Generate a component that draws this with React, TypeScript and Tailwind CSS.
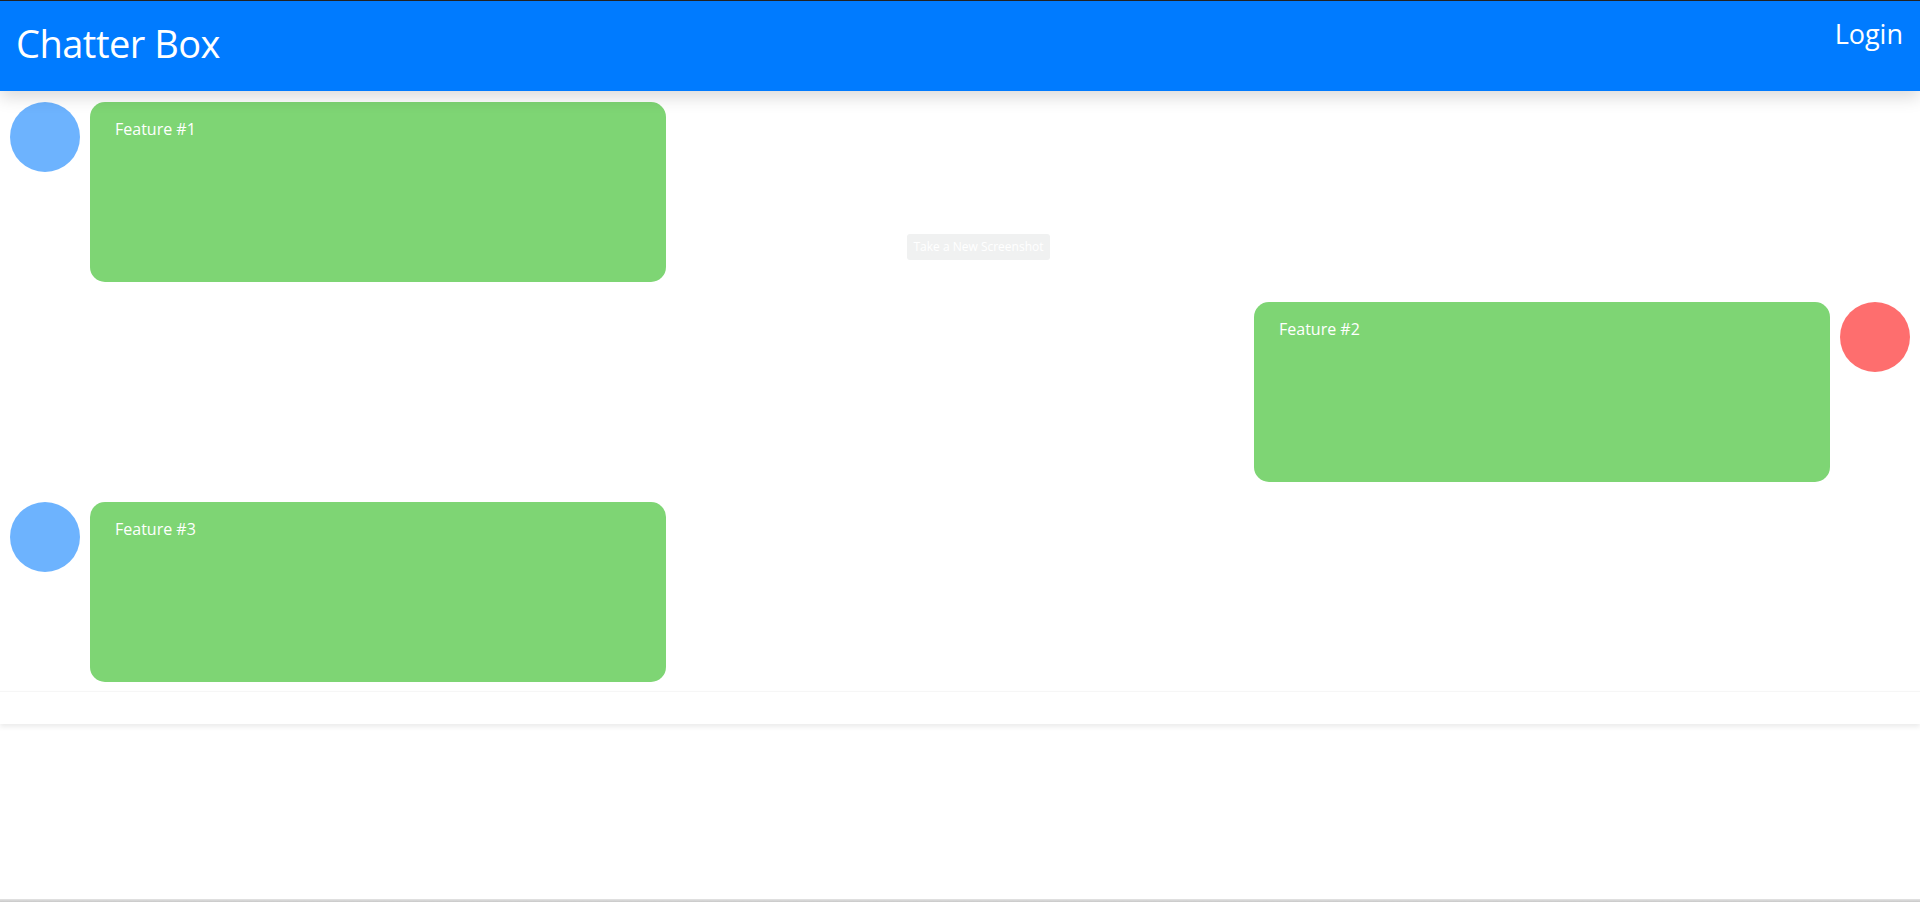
import React from "react";

type Msg = { id: number; text: string; side: "left" | "right" };

const messages: Msg[] = [
  { id: 1, text: "Feature #1", side: "left" },
  { id: 2, text: "Feature #2", side: "right" },
  { id: 3, text: "Feature #3", side: "left" },
];

function Row({ m }: { m: Msg }) {
  const avatar =
    m.side === "left" ? (
      <div className="w-[70px] h-[70px] rounded-full bg-[#6db3fe] shrink-0" />
    ) : (
      <div className="w-[70px] h-[70px] rounded-full bg-[#fe6e6e] shrink-0" />
    );
  const card = (
    <div className="w-[576px] h-[180px] rounded-[15px] bg-[#7ed574] px-[25px] pt-[15px] text-white text-[16px] leading-[24px]">
      {m.text}
    </div>
  );
  return (
    <div className={`flex gap-[10px] px-[10px] ${m.side === "right" ? "justify-end" : "justify-start"}`}>
      {m.side === "left" ? (
        <>
          {avatar}
          {card}
        </>
      ) : (
        <>
          {card}
          {avatar}
        </>
      )}
    </div>
  );
}

export default function App() {
  return (
    <div
      className="relative min-h-[902px] bg-white border-t border-[#222] overflow-hidden"
      style={{ fontFamily: '"Open Sans", "Noto Sans", "Liberation Sans", sans-serif' }}
    >
      <header className="relative z-10 h-[90px] bg-[#007bff] flex justify-between items-start shadow-[0_6px_16px_rgba(0,0,0,0.15)]">
        <h1 className="ml-[16px] mt-[16px] text-[38px] leading-[52px] text-white font-normal tracking-[-0.5px]">
          Chatter Box
        </h1>
        <div className="mr-[17px] mt-[15px] text-[27px] leading-[36px] text-white">Login</div>
      </header>
      <main className="flex flex-col gap-[20px] pt-[11px] pb-[9px]">
        {messages.map((m) => (
          <Row key={m.id} m={m} />
        ))}
      </main>
      <div className="h-[33px] border-t border-[#f6f6f6] bg-white shadow-[0_3px_5px_rgba(0,0,0,0.08)]" />
      <div className="absolute left-[907px] top-[233px] w-[143px] h-[26px] rounded-[3px] bg-[#f0f1f1] text-white text-[12px] leading-[26px] text-center">
        Take a New Screenshot
      </div>
      <div className="absolute left-0 right-0 bottom-0 h-[3px] bg-gradient-to-b from-[#e4e4e4] to-[#c8c8c8]" />
    </div>
  );
}
